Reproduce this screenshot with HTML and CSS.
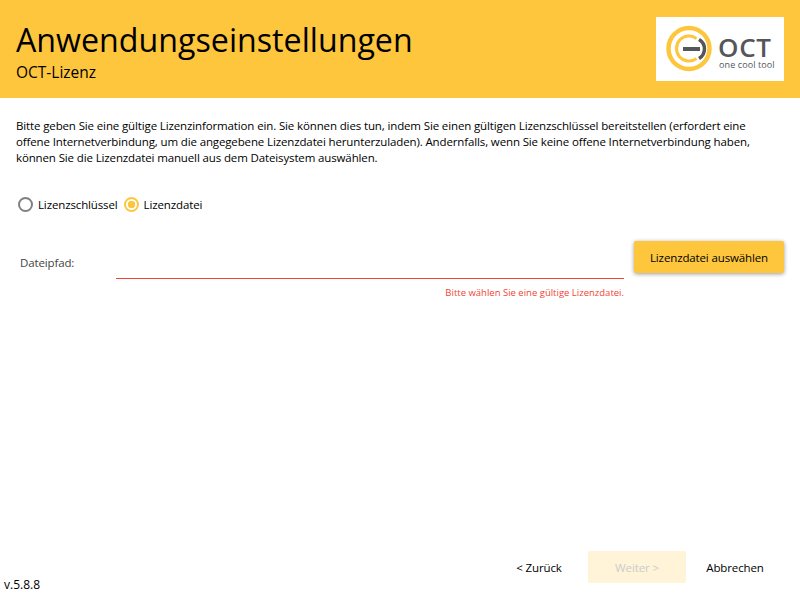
FILE: index.html
```html
<!DOCTYPE html>
<html lang="de">
<head>
    <meta charset="UTF-8">
    <title>Anwendungseinstellungen</title>
    <link rel="stylesheet" href="styles.css">
</head>
<body>
    <header class="top-bar">
        <div class="top-titles">
            <h1>Anwendungseinstellungen</h1>
            <p>OCT-Lizenz</p>
        </div>
        <div class="logo-box">
            <svg width="128" height="64" viewBox="0 0 128 64">
                <circle cx="33" cy="31.5" r="20.5" fill="none" stroke="#fec63d" stroke-width="4.5"/>
                <path d="M40.5 21.5 A12.5 12.5 0 1 0 40.5 41.5" fill="none" stroke="#fec63d" stroke-width="3"/>
                <path d="M27 32 H44" stroke="#55565a" stroke-width="4"/>
                <path d="M43 22.5 A11 11 0 0 1 43 41.5" fill="none" stroke="#55565a" stroke-width="3.5"/>
                <text x="62" y="40" class="logo-name">OCT</text>
                <text x="63" y="51" class="logo-tag">one cool tool</text>
            </svg>
        </div>
    </header>

    <main class="content">
        <p class="intro">Bitte geben Sie eine gültige Lizenzinformation ein. Sie können dies tun, indem Sie einen gültigen Lizenzschlüssel bereitstellen (erfordert eine offene Internetverbindung, um die angegebene Lizenzdatei herunterzuladen). Andernfalls, wenn Sie keine offene Internetverbindung haben, können Sie die Lizenzdatei manuell aus dem Dateisystem auswählen.</p>

        <div class="radio-row">
            <label class="radio"><span class="radio-mark"></span>Lizenzschlüssel</label>
            <label class="radio radio-on"><span class="radio-mark"></span>Lizenzdatei</label>
        </div>

        <div class="file-row">
            <span class="file-label">Dateipfad:</span>
            <div class="file-field">
                <div class="file-input"></div>
                <div class="file-error">Bitte wählen Sie eine gültige Lizenzdatei.</div>
            </div>
            <button class="btn btn-yellow">Lizenzdatei auswählen</button>
        </div>
    </main>

    <footer class="bottom-bar">
        <span class="version">v.5.8.8</span>
        <div class="bottom-buttons">
            <button class="btn btn-flat">&lt; Zurück</button>
            <button class="btn btn-disabled">Weiter &gt;</button>
            <button class="btn btn-flat">Abbrechen</button>
        </div>
    </footer>
</body>
</html>
```

FILE: styles.css
```css
body {
    font-family: "Open Sans", "Noto Sans", sans-serif;
    font-stretch: 90%;
    margin: 0;
    width: 800px;
    height: 600px;
    display: flex;
    flex-direction: column;
    background-color: #fff;
    color: #000;
    overflow: hidden;
}

.top-bar {
    height: 98px;
    background-color: #fec63d;
    display: flex;
    justify-content: space-between;
    padding: 17px 16px 0;
    box-sizing: border-box;
}

.top-titles h1 {
    margin: 0;
    font-size: 32.2px;
    line-height: 46px;
    font-weight: 400;
}

.top-titles p {
    margin: 0;
    font-size: 15.5px;
    line-height: 18px;
}

.logo-box {
    width: 128px;
    height: 64px;
    background-color: #fff;
}

.logo-name {
    font-size: 26px;
    font-stretch: 100%;
    font-weight: 600;
    letter-spacing: 0.7px;
    fill: #55565a;
}

.logo-tag {
    font-size: 9px;
    font-stretch: 100%;
    letter-spacing: 0.1px;
    fill: #55565a;
}

.content {
    flex: 1;
    padding: 20px 16px 0;
}

.intro {
    margin: 0;
    max-width: 745px;
    font-size: 11.5px;
    letter-spacing: -0.13px;
    line-height: 16px;
}

.radio-row {
    display: flex;
    gap: 6px;
    margin-top: 29px;
    padding-left: 2px;
    font-size: 11.5px;
    letter-spacing: -0.13px;
}

.radio {
    display: flex;
    align-items: center;
    gap: 5px;
    height: 18px;
}

.radio-mark {
    width: 15px;
    height: 15px;
    box-sizing: border-box;
    border: 2px solid #808080;
    border-radius: 50%;
}

.radio-on .radio-mark {
    border-color: #fec63d;
    background: radial-gradient(circle, #fec63d 0 3.5px, #fff 4px);
}

.file-row {
    display: flex;
    align-items: flex-start;
    margin-top: 28px;
}

.file-label {
    width: 100px;
    padding: 14px 0 0 4px;
    box-sizing: border-box;
    font-size: 11.5px;
    letter-spacing: -0.13px;
    line-height: 16px;
    color: #444;
}

.file-field {
    width: 508px;
}

.file-input {
    height: 37px;
    border-bottom: 1px solid #f44336;
}

.file-error {
    margin-top: 8px;
    font-size: 9.5px;
    line-height: 12px;
    text-align: right;
    color: #f44336;
}

.btn {
    font-family: inherit;
    font-stretch: inherit;
    font-size: 11.5px;
    letter-spacing: -0.13px;
    height: 32px;
    border: none;
    border-radius: 2px;
    padding: 0;
    background: none;
    color: #000;
}

.btn-yellow {
    width: 150px;
    margin-left: 10px;
    background-color: #fec63d;
    box-shadow: 0 1px 4px rgba(0, 0, 0, 0.4);
}

.btn-flat {
    width: 88px;
}

.btn-disabled {
    width: 98px;
    background-color: #fff3d8;
    color: #ccc;
}

.bottom-bar {
    display: flex;
    justify-content: space-between;
    align-items: flex-end;
    padding: 0 21px 7px 4px;
}

.version {
    font-size: 12px;
    line-height: 16px;
}

.bottom-buttons {
    display: flex;
    gap: 5px;
    padding-bottom: 10px;
}
```
